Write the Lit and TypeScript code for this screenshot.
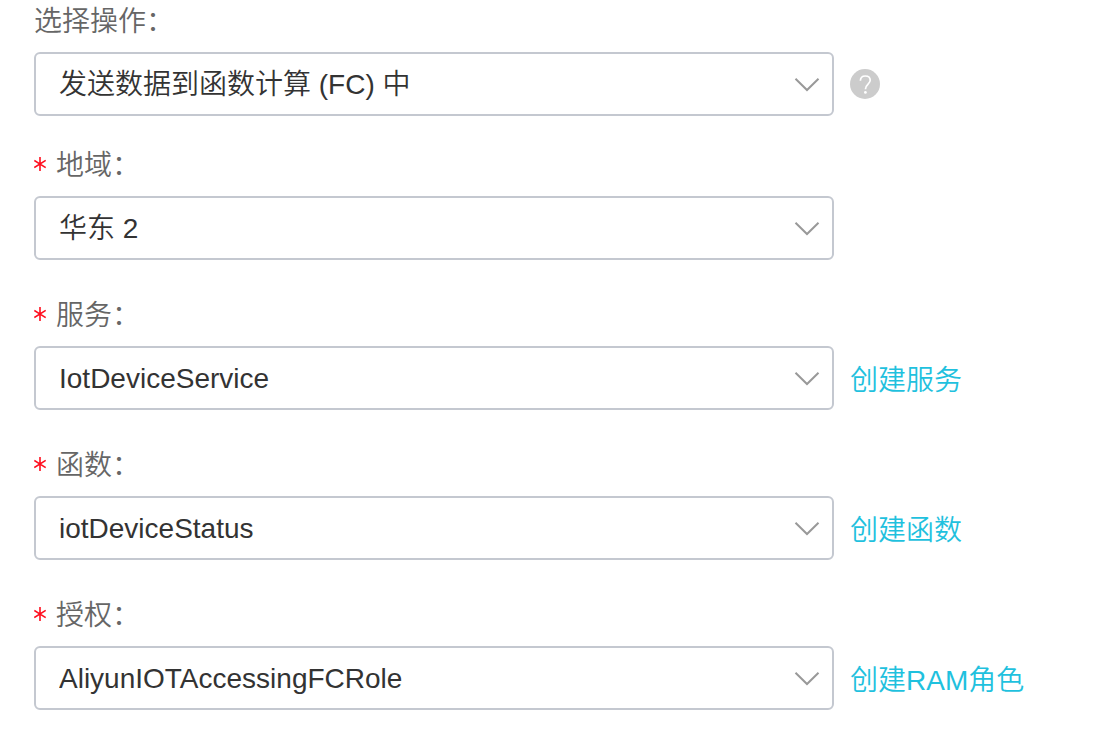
import { LitElement, html, css } from "lit";
import { customElement, property } from "lit/decorators.js";

interface Field {
  id: string;
  label: string;
  value: string;
  required: boolean;
  link?: string;
  help?: boolean;
}

const FIELDS: Field[] = [
  { id: "action", label: "选择操作", value: "发送数据到函数计算 (FC) 中", required: false, help: true },
  { id: "region", label: "地域", value: "华东 2", required: true },
  { id: "service", label: "服务", value: "IotDeviceService", required: true, link: "创建服务" },
  { id: "func", label: "函数", value: "iotDeviceStatus", required: true, link: "创建函数" },
  { id: "role", label: "授权", value: "AliyunIOTAccessingFCRole", required: true, link: "创建RAM角色" },
];

@customElement("form-field")
class FormField extends LitElement {
  @property({ attribute: false }) field!: Field;

  static styles = css`
    :host { display: block; }
    .label {
      display: flex;
      align-items: center;
      height: 40px;
      margin-bottom: 12px;
      color: #666;
    }
    .text { padding-top: 4px; }
    .star { width: 14px; height: 14px; margin-right: 8px; }
    .row { display: flex; align-items: center; gap: 16px; }
    .box { display: grid; flex: 0 1 800px; min-width: 0; align-items: center; }
    .select {
      grid-area: 1 / 1;
      appearance: none;
      width: 100%;
      height: 64px;
      margin: 0;
      padding: 2px 56px 0 23px;
      border: 2px solid #c4c8d0;
      border-radius: 6px;
      background: #fff;
      color: #333;
      font: inherit;
    }
    .arrow {
      grid-area: 1 / 1;
      justify-self: end;
      width: 26px;
      height: 16px;
      margin-right: 14px;
      pointer-events: none;
    }
    .link { color: #1fc1de; text-decoration: none; white-space: nowrap; padding-top: 6px; }
    .help { flex: none; width: 30px; height: 30px; padding: 0; border: 0; border-radius: 50%; background: none; }
    .help svg { display: block; }
  `;

  render() {
    const f = this.field;
    return html`
      <label class="label" for=${f.id}>
        ${f.required
          ? html`<svg class="star" viewBox="0 0 14 14" aria-hidden="true">
              <path d="M6 0v14M0.3 3.4l11.4 7.2M11.7 3.4l-11.4 7.2" stroke="#ff0f1f" stroke-width="1.6" />
            </svg>`
          : null}<span class="text">${f.label}：</span>
      </label>
      <div class="row">
        <div class="box">
          <select class="select" id=${f.id}><option>${f.value}</option></select>
          <svg class="arrow" viewBox="0 0 26 16" fill="none" aria-hidden="true">
            <path d="M1.5 2.8L13 14L24.5 2.8" stroke="#999" stroke-width="2" />
          </svg>
        </div>
        ${f.link ? html`<a class="link" href="#">${f.link}</a>` : null}
        ${f.help
          ? html`<button class="help" type="button" aria-label="帮助">
              <svg width="30" height="30" viewBox="0 0 30 30" fill="none">
                <circle cx="15" cy="15" r="15" fill="#ccc" />
                <path d="M10.4 11.8C10.4 8.9 12.4 7 15.3 7C18.2 7 20.2 8.8 20.2 11.3C20.2 14.9 15.4 15.4 15.4 20.2" stroke="#fff" stroke-width="1.7" />
                <circle cx="15.4" cy="23.4" r="1.4" fill="#fff" />
              </svg>
            </button>`
          : null}
      </div>
    `;
  }
}

@customElement("app-root")
class AppRoot extends LitElement {
  static styles = css`
    :host {
      display: block;
      background: #fff;
      font: 350 28px/40px "Liberation Sans", "Noto Sans CJK SC", sans-serif;
    }
    .form {
      display: flex;
      flex-direction: column;
      gap: 34px;
      padding: 0 34px 26px;
    }
    .first { margin-bottom: -6px; }
  `;

  render() {
    return html`<form class="form">
      ${FIELDS.map((f, i) => html`<form-field class=${i === 0 ? "first" : ""} .field=${f}></form-field>`)}
    </form>`;
  }
}
